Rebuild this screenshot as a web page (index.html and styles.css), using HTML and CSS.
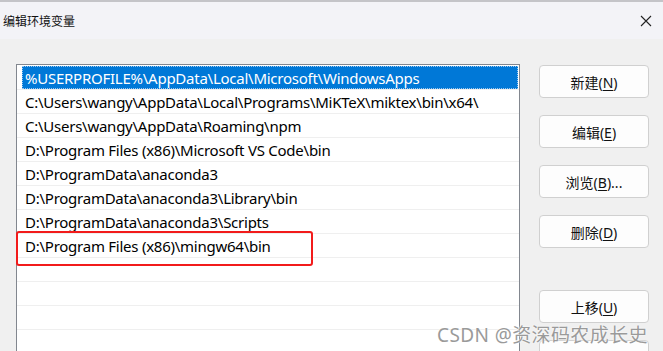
FILE: index.html
```html
<!DOCTYPE html>
<html lang="zh">
<head>
<meta charset="utf-8">
<link rel="stylesheet" href="styles.css">
</head>
<body>
<div class="window">
  <div class="titlebar">
    <span class="title">编辑环境变量</span>
    <svg class="close" width="12" height="12" viewBox="0 0 12 12"><path d="M1 1L11 11M11 1L1 11" stroke="#222" stroke-width="1.1" fill="none"/></svg>
  </div>
  <div class="content">
    <div class="list">
      <div class="row selected"><span class="cell">%USERPROFILE%\AppData\Local\Microsoft\WindowsApps</span></div>
      <div class="row"><span class="cell">C:\Users\wangy\AppData\Local\Programs\MiKTeX\miktex\bin\x64\</span></div>
      <div class="row"><span class="cell">C:\Users\wangy\AppData\Roaming\npm</span></div>
      <div class="row"><span class="cell">D:\Program Files (x86)\Microsoft VS Code\bin</span></div>
      <div class="row"><span class="cell">D:\ProgramData\anaconda3</span></div>
      <div class="row"><span class="cell">D:\ProgramData\anaconda3\Library\bin</span></div>
      <div class="row"><span class="cell">D:\ProgramData\anaconda3\Scripts</span></div>
      <div class="row"><span class="cell">D:\Program Files (x86)\mingw64\bin</span></div>
      <div class="row"><span class="cell"></span></div>
      <div class="row"><span class="cell"></span></div>
      <div class="row"><span class="cell"></span></div>
      <div class="row"><span class="cell"></span></div>
      <div class="highlight"></div>
    </div>
    <div class="buttons">
      <button class="btn">新建(<u>N</u>)</button>
      <button class="btn">编辑(<u>E</u>)</button>
      <button class="btn">浏览(<u>B</u>)...</button>
      <button class="btn">删除(<u>D</u>)</button>
      <button class="btn gap">上移(<u>U</u>)</button>
      <button class="btn">下移(<u>O</u>)</button>
    </div>
  </div>
  <div class="watermark">CSDN @资深码农成长史</div>
</div>
</body>
</html>
```
FILE: styles.css
```css
* { box-sizing: border-box; }
html, body { margin: 0; padding: 0; }
body {
  width: 663px;
  height: 351px;
  overflow: hidden;
  background: #f0f0f0;
  font-family: "Noto Sans", "Noto Sans CJK SC", sans-serif;
  color: #000;
}
.window { position: relative; width: 663px; height: 351px; overflow: hidden; }
.titlebar {
  height: 39px;
  background: #f3f3f7;
  border-top: 2px solid #c4c4c8;
  display: flex;
  align-items: center;
  justify-content: space-between;
  padding: 0 11px 0 3px;
}
.title {
  font-family: "Noto Sans CJK SC", sans-serif;
  font-size: 12px;
  color: #111;
}
.close { display: block; }
.content {
  display: flex;
  align-items: flex-start;
  padding: 25px 0 0 16px;
}
.list {
  position: relative;
  width: 504px;
  height: 300px;
  background: #fff;
  border: 1px solid #82878f;
  border-bottom: none;
  padding-top: 1px;
}
.row {
  height: 24px;
  border-bottom: 1px solid #efefef;
  display: flex;
}
.cell {
  display: block;
  flex: 1;
  margin: 0 1px 0 5px;
  padding-left: 3px;
  font-size: 15px;
  line-height: 24px;
  white-space: nowrap;
  overflow: hidden;
  letter-spacing: -0.25px;
}
.selected .cell {
  background: #0078d7;
  color: #fff;
  outline: 1px dotted #9ac8f0;
  outline-offset: -1px;
}
.highlight {
  position: absolute;
  left: -1px;
  top: 166px;
  width: 297px;
  height: 35px;
  border: 2.5px solid #f21b1b;
  border-radius: 3px;
}
.buttons {
  display: flex;
  flex-direction: column;
  gap: 17px;
  margin-left: 19px;
  padding-top: 1px;
}
.btn {
  width: 110px;
  height: 33px;
  background: #fdfdfd;
  border: 1px solid #d0d0d0;
  border-radius: 4px;
  font-family: "Noto Sans", "Noto Sans CJK SC", sans-serif;
  font-size: 14px;
  color: #111;
  padding: 0;
  margin: 0;
}
.btn u { text-underline-offset: 2px; }
.btn.gap { margin-top: 25px; }
.watermark {
  position: absolute;
  left: 437px;
  top: 320px;
  font-family: "Noto Sans", "Noto Sans CJK SC", sans-serif;
  font-size: 19px;
  color: #9a9a9a;
  text-shadow: 0 0 2px #fff, 0 0 1px #fff;
  letter-spacing: 0.4px;
  white-space: nowrap;
}
```
